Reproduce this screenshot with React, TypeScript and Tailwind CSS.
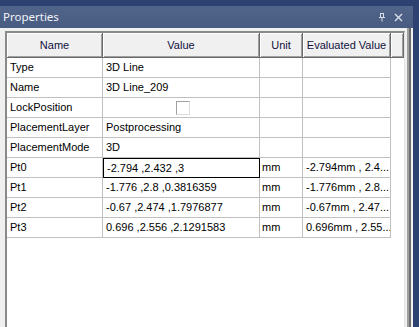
import React from "react";

type Row = { name: string; value: React.ReactNode; unit?: string; evaluated?: string; editing?: boolean };

const rows: Row[] = [
  { name: "Type", value: "3D Line" },
  { name: "Name", value: "3D Line_209" },
  { name: "LockPosition", value: <CheckBox /> },
  { name: "PlacementLayer", value: "Postprocessing" },
  { name: "PlacementMode", value: "3D" },
  { name: "Pt0", value: "-2.794 ,2.432 ,3", unit: "mm", evaluated: "-2.794mm , 2.4...", editing: true },
  { name: "Pt1", value: "-1.776 ,2.8 ,0.3816359", unit: "mm", evaluated: "-1.776mm , 2.8..." },
  { name: "Pt2", value: "-0.67 ,2.474 ,1.7976877", unit: "mm", evaluated: "-0.67mm , 2.47..." },
  { name: "Pt3", value: "0.696 ,2.556 ,2.1291583", unit: "mm", evaluated: "0.696mm , 2.55..." },
];

function CheckBox() {
  return (
    <div className="flex w-full justify-center">
      <div className="h-[14px] w-[14px] border border-t-[#a0a0a0] border-l-[#a0a0a0] border-r-[#dcdcdc] border-b-[#dcdcdc] bg-white" />
    </div>
  );
}

const HeaderCell = ({ label, w }: { label: string; w: string }) => (
  <div
    className={`${w} flex h-full items-center justify-center border-r border-b border-[#696969] bg-[#f0f0f0] shadow-[inset_1px_1px_0_#ffffff,inset_-1px_-1px_0_#a0a0a0]`}
  >
    {label}
  </div>
);

export default function App() {
  return (
    <div
      className="flex h-[327px] w-[419px] flex-col overflow-hidden bg-[#2e4272] pt-[6px] pr-[6px] text-[11px] text-black"
      style={{ fontFamily: '"Liberation Sans", Arial, sans-serif' }}
    >
      {/* title bar */}
      <div className="flex h-[22px] shrink-0 items-center bg-gradient-to-b from-[#51648a] to-[#485b80] pl-[3px] pr-[10px] text-[#f2f4f8]">
        <span className="text-[11.5px]" style={{ fontFamily: '"Noto Sans", sans-serif' }}>
          Properties
        </span>
        <div className="ml-auto flex items-center gap-[8px]">
          <svg width="8" height="9" viewBox="0 0 8 9" className="text-[#d8dde8]">
            <path d="M2 0.5h4M2.5 0.5v4M5.5 0.5v4M1 4.5h6M4 4.5v4" stroke="currentColor" strokeWidth="1" fill="none" />
          </svg>
          <svg width="9" height="9" viewBox="0 0 9 9" className="text-[#d8dde8]">
            <path d="M1 1l7 7M8 1l-7 7" stroke="currentColor" strokeWidth="1.4" />
          </svg>
        </div>
      </div>

      {/* panel */}
      <div className="flex flex-1 bg-[#f0f0f0]">
        <div className="flex flex-1 pt-[3px] pl-[5px] pr-[1px]">
          <div className="flex flex-1 flex-col border-t-2 border-l-2 border-r border-t-[#8a8a8a] border-l-[#8a8a8a] border-r-[#e3e3e3] bg-white">
            {/* header */}
            <div className="flex h-[25px] shrink-0 text-[#101040]">
              <HeaderCell label="Name" w="w-[96px]" />
              <HeaderCell label="Value" w="w-[157px]" />
              <HeaderCell label="Unit" w="w-[43px]" />
              <HeaderCell label="Evaluated Value" w="w-[88px]" />
              <HeaderCell label="" w="w-[13px]" />
            </div>
            {rows.map((r) => (
              <div key={r.name} className="flex h-[20px] shrink-0">
                <div className="flex w-[96px] items-center border-r border-b border-[#c0c0c0] pl-[3px]">{r.name}</div>
                <div
                  className={`flex w-[157px] items-center border-b pl-[3px] ${
                    r.editing ? "border border-black" : "border-r border-[#c0c0c0]"
                  }`}
                >
                  {r.value}
                </div>
                <div className="flex w-[43px] items-center border-r border-b border-[#c0c0c0] pl-[2px]">{r.unit}</div>
                <div className="flex w-[88px] items-center border-r border-b border-[#c0c0c0] pl-[3px] whitespace-nowrap overflow-hidden">
                  {r.evaluated}
                </div>
              </div>
            ))}
          </div>
        </div>
        <div className="w-[1px] bg-[#f0f0f0]" />
        <div className="w-[2px] bg-[#a0a0a0]" />
        <div className="w-[2px] bg-[#6d6d6d]" />
        <div className="w-[2px] bg-[#f0f0f0]" />
      </div>
    </div>
  );
}
